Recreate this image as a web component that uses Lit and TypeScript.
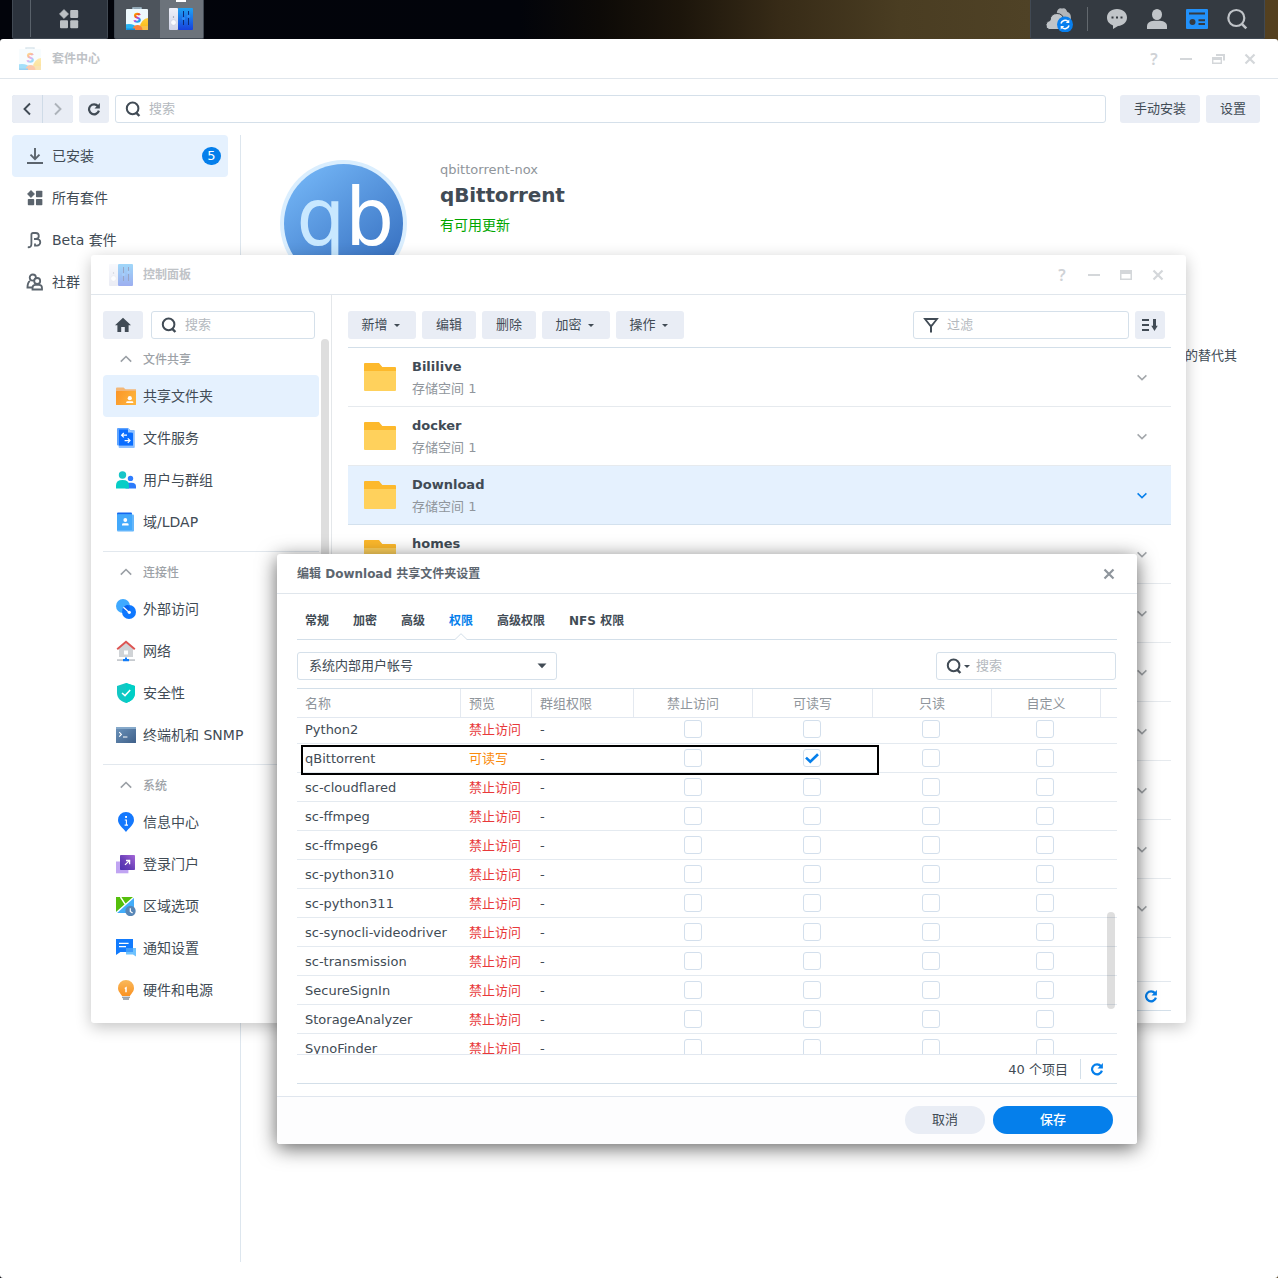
import { LitElement, html, svg, css, nothing, type TemplateResult } from "lit";
import { customElement } from "lit/decorators.js";
import { classMap } from "lit/directives/class-map.js";

const icon = (w: number, h: number, body: unknown) =>
  html`<svg class="icon" width=${w} height=${h} viewBox="0 0 ${w} ${h}" fill="none">${body}</svg>`;

const INK = "#414b55";

const searchIcon = () =>
  icon(16, 16, svg`<circle cx="7.6" cy="7.4" r="5.8" stroke=${INK} stroke-width="2"/><path d="M11.3 11.8L14.4 15" stroke=${INK} stroke-width="2.4"/>`);
const refreshIcon = (c: string) =>
  icon(14, 14, svg`<path d="M11 4.2A5 5 0 1 0 11.9 8.6" stroke=${c} stroke-width="2.2"/><path d="M12.9 1V6.4H7.5Z" fill=${c}/>`);
const caretIcon = () => icon(6, 3, svg`<path d="M0 0H6L3 3Z" fill=${INK}/>`);
const chevronDown = (c: string) => icon(12, 8, svg`<path d="M1.6 1.4L6 5.6L10.4 1.4" stroke=${c} stroke-width="1.5"/>`);
const chevronUp = () => icon(14, 8, svg`<path d="M1.8 6.6L7 1.5L12.2 6.6" stroke="#9a9fa5" stroke-width="1.6"/>`);
const gridIcon = (c: string, s: number) =>
  html`<svg class="icon" width=${s} height=${s} viewBox="0 0 20 20"><g fill=${c}>
    <path d="M5 0.4L9.6 5L5 9.6L0.4 5Z" stroke=${c} stroke-width="0.5" stroke-linejoin="round"/>
    <rect x="11.2" y="1" width="8" height="8" rx="1"/><rect x="1" y="11.2" width="8" height="8" rx="1"/>
    <rect x="11.2" y="11.2" width="8" height="8" rx="1"/></g></svg>`;

const packageIcon = () =>
  icon(24, 24, svg`
    <defs>
      <linearGradient id="pkS" x1="0" y1="0" x2="0.6" y2="1"><stop offset="0" stop-color="#ffb000"/><stop offset=".4" stop-color="#f0561e"/><stop offset=".65" stop-color="#c03be0"/><stop offset="1" stop-color="#18a8f0"/></linearGradient>
      <linearGradient id="pkY" x1="0" y1="0" x2="0" y2="1"><stop offset="0" stop-color="#ffd03c"/><stop offset="1" stop-color="#f0a800"/></linearGradient>
      <clipPath id="pkC"><rect x="1" y="2" width="22" height="21" rx="1"/></clipPath>
    </defs>
    <path d="M8 2.5V1H16V2.5" stroke="#a9c4d4" stroke-width="1.4"/>
    <g clip-path="url(#pkC)">
      <rect x="1" y="2" width="22" height="21" fill="#edf8fd"/>
      <circle cx="24" cy="20" r="9" fill="url(#pkY)"/>
      <rect x="1" y="19" width="22" height="4" fill="#f5c04a"/>
      <ellipse cx="4" cy="20" rx="7" ry="3" fill="#28b4f2"/>
      <circle cx="12.5" cy="23" r="5" fill="#f8813c"/>
      <rect x="1" y="21.5" width="9" height="2" fill="#0f8ee0"/>
    </g>
    <path d="M14.800 8.200C14.200 6.400 10 6.200 10 8.700C10 11.200 14.800 10.200 14.800 12.800C14.800 15.400 10 15.200 9.400 13.200" stroke="url(#pkS)" stroke-width="2.2"/>`);

const panelIcon = () =>
  icon(26, 24, svg`
    <defs>
      <linearGradient id="cpB" x1="0" y1="0" x2="0" y2="1"><stop offset="0" stop-color="#1fa2f2"/><stop offset="1" stop-color="#1741dc"/></linearGradient>
      <linearGradient id="cpG" x1="0" y1="0" x2="0" y2="1"><stop offset="0" stop-color="#eff1fa"/><stop offset="1" stop-color="#cfd3e6"/></linearGradient>
    </defs>
    <rect x="1" y="1" width="9" height="22" rx="1" fill="url(#cpG)"/>
    <rect x="10" y="1" width="15" height="22" rx="1" fill="url(#cpB)"/>
    <circle cx="5.5" cy="15.5" r="2.8" fill="#fafbff" stroke="#c6cada" stroke-width=".6"/><circle cx="5.5" cy="10" r=".7" fill="#8a90a4"/>
    <path d="M15.500 4V18M20.500 4V18" stroke="#0c2a78" stroke-width="1"/>
    <circle cx="15.500" cy="11.5" r="1.6" fill="#2e8cf6"/><circle cx="20.500" cy="9.3" r="1.6" fill="#2e8cf6"/>`);

const menuIcons: Record<string, () => TemplateResult> = {
  share: () => icon(20, 20, svg`<defs><linearGradient id="g1" x1="0" x2="1" y1="0" y2=".4"><stop offset="0" stop-color="#fb9526"/><stop offset="1" stop-color="#fdb23c"/></linearGradient></defs>
    <path d="M0 2.500Q0 1.500 1 1.500H7.500L9.500 3.200H20V8H0Z" fill="#f3b777"/><rect x="0" y="5" width="20" height="14" rx=".6" fill="url(#g1)"/>
    <circle cx="13.8" cy="12.2" r="2.1" fill="#fff"/><path d="M10.2 17V16.4Q10.2 15.2 11.6 15.2H16Q17.3 15.2 17.3 16.4V17Z" fill="#fff"/>`),
  files: () => icon(20, 20, svg`<rect x="2.6" y="2" width="16.2" height="18" rx="1" fill="#8fc0ff"/><path d="M1 1Q1 0 2 0H12L17 4.6V17.6H2Q1 17.6 1 16.8Z" fill="#5da3ff"/><path d="M3 1.6H12.4L17 5.4V17.6H3Z" fill="#0a6dff"/><path d="M12 .2L17 4.6H12Z" fill="#9cc9ff"/>
    <path d="M5.6 7.2H11M7.8 5L5.6 7.2L7.8 9.4M14 12.6H8.6M11.8 10.4L14 12.6L11.8 14.8" stroke="#fff" stroke-width="1.2"/>`),
  users: () => icon(20, 20, svg`<circle cx="6.5" cy="5" r="3.7" fill="#17c5c8"/><circle cx="14.5" cy="8.4" r="2.7" fill="#2f7dff"/><path d="M9.5 12.7H15.5Q20 12.7 20 16.4V18.6H9.5Z" fill="#2d7bfb"/><path d="M0 18.6V15.4Q0 10 6.5 10Q13 10 13 15.4V18.6Z" fill="#06cdc6"/>`),
  ldap: () => icon(20, 20, svg`<rect x="1" y=".6" width="15" height="17" rx="1" fill="#1368f0"/><rect x="1" y="2.4" width="17" height="17.2" rx="1" fill="#64b6fb"/><rect x="1" y="2.4" width="15" height="15.6" fill="#43a9fb"/>
    <circle cx="9.3" cy="8" r="1.9" fill="#fff"/><path d="M6 13.4V12.6Q6 11.2 7.4 11.2H11.2Q12.6 11.2 12.6 12.6V13.4Z" fill="#fff"/>`),
  external: () => icon(20, 20, svg`<circle cx="7" cy="7" r="7" fill="#3fa9ff"/><circle cx="13" cy="13" r="7" fill="#0f78ff"/><path d="M6.4 10.6Q7.6 6.9 11.6 6.1Q13.6 8 13.9 9.4L13 13Z" fill="#0a62ee"/><path d="M7.4 8.2L13 13.2" stroke="#fff" stroke-width="1.3"/><circle cx="13.3" cy="13.3" r="1.6" fill="#fff"/>`),
  network: () => icon(20, 22, svg`<path d="M3 8.5L10 2.5L17 8.5V17H3Z" fill="#d0d3d6"/><path d="M1.2 9.2L10 1.8L18.8 9.2" stroke="#dc5452" stroke-width="2"/><rect x="8" y="10.5" width="4" height="4" fill="#fff"/><rect x="1" y="19.2" width="18" height="1.8" fill="#c6cacf"/><path d="M9 17.4H11V19H13V21.2H7V19H9Z" fill="#127cf8"/>`),
  shield: () => icon(20, 20, svg`<path d="M10 0L19 3V10C19 15.2 15 18.5 10 20C5 18.5 1 15.2 1 10V3Z" fill="#12c7c4"/><path d="M10 0L19 3V10C19 15.2 15 18.5 10 20Z" fill="#00cfc6"/><path d="M6 10L9 12.6L14.2 7" stroke="#fff" stroke-width="1.5"/>`),
  terminal: () => icon(20, 20, svg`<defs><linearGradient id="g2" x1="0" x2="1" y1="0" y2="1"><stop offset="0" stop-color="#6c93bb"/><stop offset="1" stop-color="#3f6089"/></linearGradient></defs><rect x="0" y="2" width="20" height="16" rx=".6" fill="url(#g2)"/><rect x="0" y="2" width="20" height="2" fill="#86a9ca"/><path d="M3.2 7.2L5.4 9.4L3.2 11.6M7 12H11.4" stroke="#fff" stroke-width="1.1"/>`),
  info: () => icon(20, 20, svg`<path d="M10 0A8 8 0 0 1 18 8C18 12.5 13 16 10 20C7 16 2 12.5 2 8A8 8 0 0 1 10 0Z" fill="#1478fd"/><rect x="9.1" y="4" width="1.9" height="1.9" fill="#fff"/><path d="M8.800 8H10.400V13M8.600 13.100H12" stroke="#fff" stroke-width="1.1"/>`),
  portal: () => icon(20, 20, svg`<defs><linearGradient id="g3" x1="1" x2="0" y1="0" y2="1"><stop offset="0" stop-color="#a566d8"/><stop offset=".55" stop-color="#6a40b8"/><stop offset="1" stop-color="#4d2fb0"/></linearGradient></defs><rect x="0" y="7.500" width="12.400" height="11.800" fill="#c0a4f2"/><rect x="4" y="1" width="15" height="15" rx=".8" fill="url(#g3)"/><path d="M9 10.900L13.400 6.600M10 6.500H13.600V10.200" stroke="#fff" stroke-width="1.3"/>`),
  region: () => icon(20, 20, svg`<path d="M0 1H18V17H0Z" fill="#43adfa"/><path d="M0 1H18L0 16Z" fill="#55bf0c"/><path d="M18 1L0 17M4.500 1L9.400 8.600" stroke="#fff" stroke-width="1.4"/><circle cx="14.5" cy="15" r="5.200" fill="#5786b7"/><path d="M14.300 12.200V15.400L16.600 17" stroke="#fff" stroke-width="1.2"/>`),
  notify: () => icon(20, 20, svg`<path d="M0 1H17V14H4.4L0 17Z" fill="#127bfd"/><path d="M3 5.4H12.6M3 8.6H10" stroke="#fff" stroke-width="1.1"/><path d="M10 10H20V18.6L17 16.6H10Z" fill="#6ec2fe"/><rect x="10" y="10" width="7" height="4" fill="#3f9cfb"/>`),
  power: () => icon(20, 20, svg`<defs><linearGradient id="g4" x1="0" x2="0" y1="0" y2="1"><stop offset="0" stop-color="#f9b95c"/><stop offset="1" stop-color="#fa9222"/></linearGradient></defs><path d="M10 0A8 8 0 0 1 18 8C18 11.6 15.4 13.4 14 16H6C4.600 13.400 2 11.600 2 8A8 8 0 0 1 10 0Z" fill="url(#g4)"/><path d="M8.8 8.600L10 7.900V12.200" stroke="#fff" stroke-width="1.500"/><rect x="6" y="16.600" width="8" height="1.500" fill="#9ba4ad"/><rect x="7" y="18.100" width="6" height="1.800" fill="#9ba4ad"/>`),
};

const sections = [
  { title: "文件共享", items: [["share", "共享文件夹"], ["files", "文件服务"], ["users", "用户与群组"], ["ldap", "域/LDAP"]] },
  { title: "连接性", items: [["external", "外部访问"], ["network", "网络"], ["shield", "安全性"], ["terminal", "终端机和 SNMP"]] },
  { title: "系统", items: [["info", "信息中心"], ["portal", "登录门户"], ["region", "区域选项"], ["notify", "通知设置"], ["power", "硬件和电源"]] },
];

const folders = ["Bililive", "docker", "Download", "homes", "", "", "", "", "", ""];

const users = ["Python2", "qBittorrent", "sc-cloudflared", "sc-ffmpeg", "sc-ffmpeg6", "sc-python310", "sc-python311",
  "sc-synocli-videodriver", "sc-transmission", "SecureSignIn", "StorageAnalyzer", "SynoFinder"];

@customElement("app-root")
export class AppRoot extends LitElement {
  static styles = css`
    :host { display: block; color: #414b55; font: 13px/20px "DejaVu Sans", "Noto Sans CJK SC", sans-serif; }
    * { box-sizing: border-box; }
    .icon { display: block; flex: none; }
    .desktop { position: relative; width: 1278px; height: 1278px; overflow: hidden;
      background: linear-gradient(90deg, #02040b 0, #02040a 520px, #0d0a07 600px, #1c150b 680px, #372b17 780px, #4a3d22 900px, #4f4226 1031px, #54401f 1278px); }

    .taskbar { display: flex; height: 39px; padding: 0 12px; gap: 6px; }
    .tb { display: flex; height: 39px; background: #2c333d; border: 1px solid #414953; border-top: 0; border-radius: 0 0 2px 2px; }
    .tb-main { width: 96px; }
    .tb-edge { width: 18px; border-right: 1px solid #59616a; height: 37px; }
    .tb-grid { flex: 1; display: flex; align-items: center; justify-content: center; }
    .tb-apps { width: 90px; background: #4d545c; }
    .tb-app { width: 45px; height: 38px; display: flex; align-items: center; justify-content: center; }
    .tb-app.on { background: #6c737b; width: 44px; flex-direction: column; justify-content: flex-start; }
    .tb-mark { width: 10px; height: 2px; background: #fff; margin-bottom: 5px; }
    .tray { margin-left: auto; width: 235px; margin-right: 1px; align-items: center; background: #343a41; padding-left: 14px; }
    .tray-sep { width: 1px; height: 24px; background: #62686e; margin: 0 18px 0 14px; }
    .tray-items { display: flex; gap: 18px; align-items: center; }

    .window { position: absolute; background: #fff; display: flex; flex-direction: column; border-radius: 3px; }
    .pkg { left: 0; top: 39px; width: 1278px; height: 1239px; }
    .cp { left: 91px; top: 255px; width: 1095px; height: 768px; box-shadow: 0 4px 16px rgba(0,0,0,.24); }
    .dlg { left: 277px; top: 554px; width: 860px; height: 590px; box-shadow: 0 4px 20px rgba(0,0,0,.62); }
    .titlebar { flex: none; height: 40px; display: flex; align-items: center; padding: 0 20px 0 18px; border-bottom: 1px solid #e0e6ec; font-size: 12px; font-weight: bold; }
    .titlebar .name { color: #bfc3c7; margin-left: 10px; padding-top: 1px; }
    .faded { opacity: .42; display: flex; }
    .controls { margin-left: auto; display: flex; gap: 16px; }
    .ctl { width: 16px; height: 16px; display: flex; align-items: center; justify-content: center; color: #cfd2d6; font: 600 16px/16px "Noto Sans", sans-serif; }
    .cp .titlebar { padding-left: 17px; }
    .cp .titlebar .name { margin-left: 9px; }

    .btn { height: 28px; border-radius: 3px; background: #e9edf5; display: flex; align-items: center; justify-content: center; gap: 6px; flex: none; }
    .field { height: 28px; border: 1px solid #d5e0ea; border-radius: 3px; display: flex; align-items: center; padding-left: 9px; gap: 8px; color: #b4b9be; background: #fff; }
    .w30 { width: 30px; } .w40 { width: 40px; } .w54 { width: 54px; } .w68 { width: 68px; padding-right: 3px; } .w80 { width: 80px; }

    .pkg-tools { display: flex; padding: 16px 18px 12px 12px; gap: 6px; }
    .pair { display: flex; gap: 1px; background: #cfdbe7; border-radius: 3px; overflow: hidden; width: 61px; }
    .pair .btn { border-radius: 0; }
    .pkg-search { flex: 1; margin-right: 8px; }
    .pkg-body { display: flex; flex: 1; padding: 0 0 16px 12px; }
    .pkg-nav { width: 229px; padding-right: 12px; border-right: 1px solid #dde6ee; font-size: 14px; }
    .nav-item { height: 42px; display: flex; align-items: center; border-radius: 4px; padding: 0 7px 0 13px; gap: 7px; font-size: 14px; }
    .nav-item.on { background: #e5f1fe; }
    .nav-ico { width: 20px; display: flex; justify-content: center; }
    .badge { margin-left: auto; width: 19px; height: 18px; border-radius: 9px; background: #057feb; color: #fff; font-size: 13px; line-height: 18px; text-align: center; }
    .pkg-detail { flex: 1; padding: 25px 41px 0 39px; }
    .pkg-head { display: flex; gap: 32px; height: 186px; }
    .pkg-info { color: #8f959b; }
    .pkg-info div { height: 19px; line-height: 19px; }
    .pkg-info .pkg-title { color: #414b55; font-size: 20px; font-weight: bold; line-height: 32px; height: 32px; letter-spacing: -.15px; }
    .pkg-info .pkg-update { color: #00a600; font-size: 14px; line-height: 28px; height: 28px; }
    .pkg-desc { text-align: right; line-height: 20px; }

    .cp-body { display: flex; flex: 1; min-height: 0; }
    .cp-nav { width: 241px; border-right: 1px solid #e4e7ea; padding: 16px 12px 0 12px; position: relative; }
    .cp-find { display: flex; gap: 8px; margin-bottom: 4px; }
    .cp-find .field { width: 164px; }
    .sec { height: 32px; display: flex; align-items: center; padding-left: 16px; gap: 10px; color: #9da2a7; font-size: 12px; font-weight: 500; }
    .sec span { padding-top: 2px; }
    .divider { height: 1px; background: #e2e8ee; margin: 8px 0 4px; }
    .nav-scroll { position: absolute; left: 230px; top: 44px; width: 8px; height: 500px; border-radius: 4px; background: #dedede; }
    .cp-main { flex: 1; padding: 16px 15px 12px 16px; display: flex; flex-direction: column; }
    .cp-tools { display: flex; gap: 6px; padding: 0 6px 8px 0; border-bottom: 1px solid #d3dfe9; }
    .cp-tools .field { width: 216px; margin-left: auto; }
    .folder { height: 59px; display: flex; align-items: center; border-bottom: 1px solid #e6eaee; padding: 0 23px 0 16px; }
    .folder.on { background: #e5f1fe; border-bottom-color: #d3e1ee; }
    .folder > .folder-text + .icon { margin-top: 2px; }
    .folder-text { margin-left: 16px; flex: 1; padding-top: 2px; }
    .folder-name { font-weight: bold; line-height: 22px; height: 22px; }
    .folder-sub { color: #90969c; line-height: 22px; }
    .cp-foot { margin-top: auto; height: 30px; border-top: 1px solid #e2e8ee; border-bottom: 1px solid #d3dfe9; display: flex; align-items: center; justify-content: flex-end; padding-right: 13px; }

    .dlg .titlebar { padding-left: 20px; color: #5d666f; }
    .dlg-body { padding: 0 20px; flex: 1; }
    .tabs { display: flex; gap: 24px; height: 46px; padding: 14px 8px 0; border-bottom: 1px solid #d3dfe9; font-size: 12px; font-weight: bold; line-height: 26px; }
    .tab { position: relative; }
    .tab.on { color: #057feb; }
    .tab .notch { position: absolute; left: 6px; top: 25px; }
    .dlg-tools { display: flex; justify-content: space-between; padding: 12px 1px 8px 0; }
    .select { width: 260px; padding: 0 9px 0 11px; justify-content: space-between; color: #414b55; }
    .dlg-tools .search { width: 180px; gap: 0; }
    .search .drop { margin-left: 2px; }
    .search .hint { margin-left: 6px; }
    .row { display: grid; grid-template-columns: 164px 71px 102px 119px 120px 119px 109px 16px; }
    .thead { height: 30px; border-top: 1px solid #d3dfe9; border-bottom: 1px solid #e2e8f0; color: #8f959b; }
    .thead .cell { border-right: 1px solid #e4e9f0; padding-top: 2px; }
    .thead .cell:last-child { border-right: 0; }
    .cell { padding-left: 8px; display: flex; align-items: center; }
    .cell.mid { padding-left: 0; justify-content: center; }
    .tview { height: 337px; overflow: hidden; border-bottom: 1px solid #e2e8f0; position: relative; }
    .trows { margin-top: -3px; }
    .trow { height: 29px; border-bottom: 1px solid #e4eaf0; }
    .trow .cell { padding-top: 2px; }
    .trow .mid { padding: 0 1px 0 0; }
    .trow .mid + .mid { padding-right: 2px; }
    .trow .mid + .mid + .mid { padding-right: 3px; }
    .deny { color: #e8383a; }
    .allow { color: #fa8a0c; }
    .box { width: 18px; height: 18px; border: 1px solid #d3dfec; border-radius: 3px; background: #fff; display: flex; align-items: center; justify-content: center; }
    .thumb { position: absolute; left: 810px; top: 194px; width: 8px; height: 97px; border-radius: 4px; background: rgba(0,0,0,.13); }
    .count { height: 29px; border-bottom: 1px solid #d3dfe9; display: flex; align-items: center; justify-content: flex-end; padding-right: 13px; }
    .count-num { padding-top: 2px; }
    .count-sep { width: 1px; height: 20px; background: #d3dfe9; margin: 0 9px 0 12px; }
    .actions { height: 48px; border-top: 1px solid #e0e6ee; display: flex; align-items: center; justify-content: flex-end; gap: 8px; padding: 0 24px 1px 0; background: #fdfdfe; border-radius: 0 0 3px 3px; }
    .actions .btn { border-radius: 14px; }
    .actions .save { width: 120px; background: #057feb; color: #fff; font-weight: 500; }
    .marker { position: absolute; left: 24px; top: 191px; width: 578px; height: 30px; border: 2px solid #000; }
    .logo-text { font: 80px "DejaVu Sans", sans-serif; }
  `;

  private controls(kind: "restore" | "max") {
    const c = "#d4d7da";
    return html`<div class="controls">
      <div class="ctl">?</div>
      <div class="ctl">${icon(12, 2, svg`<rect width="12" height="2" fill=${c}/>`)}</div>
      <div class="ctl">${kind === "max"
        ? icon(12, 10, svg`<path d="M0 0H12V10H0ZM1.500 4V8.600H10.500V4Z" fill-rule="evenodd" fill=${c}/>`)
        : icon(13, 10, svg`<path d="M4 0H13V6.500H11V2H4Z" fill=${c}/><path d="M0 3H10V10H0ZM1.400 6V8.600H8.600V6Z" fill-rule="evenodd" fill=${c}/>`)}</div>
      <div class="ctl">${icon(12, 12, svg`<path d="M1.500 1.500L10.500 10.500M10.500 1.500L1.500 10.500" stroke=${c} stroke-width="2.200"/>`)}</div>
    </div>`;
  }

  private taskbar() {
    const g = "#c0c4c8";
    return html`<div class="taskbar">
      <div class="tb tb-main"><div class="tb-edge"></div><div class="tb-grid">${gridIcon("#bcc0c4", 20)}</div></div>
      <div class="tb tb-apps"><div class="tb-app">${packageIcon()}</div><div class="tb-app on"><div class="tb-mark"></div>${panelIcon()}</div></div>
      <div class="tb tray">
        ${icon(28, 26, svg`<path d="M12 12A6 6 0 0 1 22.500 6Q26 7 26 12V18H12Z" fill="#a9adb1"/><path d="M12 6Q13 1.500 17 2.500Q21 1 22 6Q26 8 25 14L20 15L15 8Z" fill="#b2b6ba"/><path d="M4 23.500Q0.500 22.500 1 18.500Q1.500 15 5 14.500Q5.500 7.500 12 7.500Q18 7.500 19 14V23.500Z" fill=${g} stroke="#343a41" stroke-width="1"/><circle cx="20" cy="18.500" r="8" fill="#087fee"/><path d="M16 17.500A4.200 4.200 0 0 1 23 15.500M24 19.500A4.200 4.200 0 0 1 17 21.500" stroke="#fff" stroke-width="1.500"/><path d="M24.300 13.500V17H20.800ZM15.700 23.500V20H19.200Z" fill="#fff"/>`)}
        <div class="tray-sep"></div>
        <div class="tray-items">
          ${icon(22, 22, svg`<path d="M11 1C17 1 21 4.800 21 9.500C21 14 17.500 17.500 12 18L7 21V17.400C3.500 16 1 13.500 1 9.500C1 4.800 5 1 11 1Z" fill=${g}/><path d="M5.500 8.500H7.500V10.500H5.500ZM10 8.500H12V10.500H10ZM14.500 8.500H16.500V10.500H14.500Z" fill="#343a41"/>`)}
          ${icon(22, 22, svg`<ellipse cx="11" cy="6.500" rx="5" ry="5.500" fill=${g}/><path d="M1 21V18Q1 13.500 8 12.800H14Q21 13.500 21 18V21Z" fill=${g}/>`)}
          ${icon(22, 22, svg`<rect y="1" width="22" height="20" rx="1" fill="#2291fa"/><path d="M3 5.500H19M12.500 12.300H19M12.500 16H19" stroke="#343a41" stroke-width="2"/><circle cx="6.500" cy="14" r="3" fill="#343a41"/>`)}
          ${icon(22, 22, svg`<circle cx="10.300" cy="10" r="8" stroke=${g} stroke-width="2.200"/><path d="M15.800 15.800L20.300 20.300" stroke=${g} stroke-width="2.600"/>`)}
        </div>
      </div>
    </div>`;
  }

  private packageCenter() {
    const n = "#5b646d";
    const items: [TemplateResult, string][] = [
      [icon(16, 16, svg`<path d="M8 0V11M3.500 6.600L8 11.100L12.500 6.600" stroke=${n} stroke-width="1.900"/><path d="M0 15H16" stroke=${n} stroke-width="2"/>`), "已安装"],
      [gridIcon(n, 16), "所有套件"],
      [icon(16, 18, svg`<path d="M.8 16.200Q4.400 16.600 4.400 13V3.400Q4.400 2 6 2H8.800A3 3 0 0 1 8.800 8H7M8.800 8H10A3.300 3.300 0 0 1 10 14.600H8V12.600" stroke=${n} stroke-width="1.800"/>`), "Beta 套件"],
      [icon(18, 18, svg`<circle cx="6.800" cy="4.600" r="3.100" stroke=${n} stroke-width="1.800"/><path d="M4 8Q1.500 9.500 1.500 14.500H6" stroke=${n} stroke-width="1.900"/><circle cx="11.200" cy="8" r="3" fill="#fff" stroke=${n} stroke-width="1.800"/><path d="M6.500 16.500V15Q6.500 11.800 9.500 11.800H13Q16 11.800 16 15V16.500Z" fill="#fff" stroke=${n} stroke-width="1.800"/>`), "社群"],
    ];
    return html`<section class="window pkg">
      <header class="titlebar"><span class="faded">${packageIcon()}</span><span class="name">套件中心</span>${this.controls("restore")}</header>
      <div class="pkg-tools">
        <div class="pair">
          <div class="btn w30">${icon(8, 14, svg`<path d="M7 1.500L1.500 7L7 12.500" stroke=${INK} stroke-width="1.900"/>`)}</div>
          <div class="btn w30">${icon(8, 14, svg`<path d="M1 1.500L6.500 7L1 12.500" stroke="#adb3ba" stroke-width="1.900"/>`)}</div>
        </div>
        <div class="btn w30">${refreshIcon(INK)}</div>
        <div class="field pkg-search">${searchIcon()}<span>搜索</span></div>
        <div class="btn w80">手动安装</div>
        <div class="btn w54">设置</div>
      </div>
      <div class="pkg-body">
        <nav class="pkg-nav">
          ${items.map(([i, t], k) => html`<div class=${classMap({ "nav-item": true, on: k === 0 })}>
            <span class="nav-ico">${i}</span><span>${t}</span>${k === 0 ? html`<span class="badge">5</span>` : nothing}</div>`)}
        </nav>
        <div class="pkg-detail">
          <div class="pkg-head">
            ${icon(128, 128, svg`<defs><linearGradient id="qb" x1=".15" y1=".05" x2=".85" y2=".95"><stop offset="0" stop-color="#72b4f5"/><stop offset="1" stop-color="#356ebf"/></linearGradient></defs>
              <circle cx="63.500" cy="63.500" r="63.500" fill="#daeefe"/><circle cx="63.500" cy="63.500" r="59.500" fill="url(#qb)"/>
              <text class="logo-text" transform="translate(16.500 85) scale(.96 1)" fill="#fff"><tspan fill="#c8e8ff">q</tspan><tspan>b</tspan></text>`)}
            <div class="pkg-info"><div>qbittorrent-nox</div><div class="pkg-title">qBittorrent</div><div class="pkg-update">有可用更新</div></div>
          </div>
          <div class="pkg-desc">的替代其</div>
        </div>
      </div>
    </section>`;
  }

  private controlPanel() {
    return html`<section class="window cp">
      <header class="titlebar"><span class="faded">${panelIcon()}</span><span class="name">控制面板</span>${this.controls("max")}</header>
      <div class="cp-body">
        <nav class="cp-nav">
          <div class="cp-find">
            <div class="btn w40">${icon(16, 16, svg`<path d="M8 .8L16 8.300H13.600V15H9.800V10H6.200V15H2.400V8.300H0Z" fill=${INK}/>`)}</div>
            <div class="field">${searchIcon()}<span>搜索</span></div>
          </div>
          ${sections.map((s, si) => html`
            ${si ? html`<div class="divider"></div>` : nothing}
            <div class="sec">${chevronUp()}<span>${s.title}</span></div>
            ${s.items.map(([k, t]) => html`<div class=${classMap({ "nav-item": true, on: k === "share" })}><span class="nav-ico">${menuIcons[k]()}</span><span>${t}</span></div>`)}`)}
          <div class="nav-scroll"></div>
        </nav>
        <div class="cp-main">
          <div class="cp-tools">
            <div class="btn w68">新增 ${caretIcon()}</div><div class="btn w54">编辑</div><div class="btn w54">删除</div>
            <div class="btn w68">加密 ${caretIcon()}</div><div class="btn w68">操作 ${caretIcon()}</div>
            <div class="field">${icon(16, 16, svg`<path d="M2 2H14L8.800 8.500H7.200Z" stroke=${INK} stroke-width="1.800"/><path d="M8 8V15.500" stroke=${INK} stroke-width="2"/>`)}<span>过滤</span></div>
            <div class="btn w30">${icon(16, 14, svg`<path d="M0 2H7M0 7H7M0 12H7" stroke=${INK} stroke-width="2"/><path d="M12.500 1V9" stroke=${INK} stroke-width="3"/><path d="M9.300 7.800H15.700L12.500 13Z" fill=${INK}/>`)}</div>
          </div>
          ${folders.map((f) => html`<div class=${classMap({ folder: true, on: f === "Download" })}>
            ${f ? icon(32, 28, svg`<path d="M0 1Q0 0 1 0H15L18.300 4H31Q32 4 32 5V12H0Z" fill="#fdb92c"/><path d="M0 8H32V27Q32 28 31 28H1Q0 28 0 27Z" fill="#ffd15c"/>`) : nothing}
            <div class="folder-text">${f ? html`<div class="folder-name">${f}</div><div class="folder-sub">${f === "homes" ? nothing : "存储空间 1"}&nbsp;</div>` : nothing}</div>
            ${chevronDown(f === "Download" ? "#057feb" : "#a3a7ab")}
          </div>`)}
          <div class="cp-foot">${refreshIcon("#057feb")}</div>
        </div>
      </div>
    </section>`;
  }

  private dialog() {
    const tabs = ["常规", "加密", "高级", "权限", "高级权限", "NFS 权限"];
    return html`<section class="window dlg">
      <header class="titlebar"><span>编辑 Download 共享文件夹设置</span>
        <div class="controls"><div class="ctl">${icon(12, 12, svg`<path d="M1.500 1.500L10.500 10.500M10.500 1.500L1.500 10.500" stroke="#8e959c" stroke-width="2.200"/>`)}</div></div></header>
      <div class="dlg-body">
        <div class="tabs">${tabs.map((t) => html`<div class=${classMap({ tab: true, on: t === "权限" })}>${t}${t === "权限"
          ? html`<span class="notch">${icon(12, 7, svg`<path d="M0 6.500L6 .7L12 6.500V7H0Z" fill="#fff"/><path d="M0 6.500L6 .7L12 6.500" stroke="#d3dfe9"/>`)}</span>` : nothing}</div>`)}</div>
        <div class="dlg-tools">
          <div class="field select"><span>系统内部用户帐号</span>${icon(10, 6, svg`<path d="M.5 .5H9.500L5 5.300Z" fill=${INK}/>`)}</div>
          <div class="field search">${searchIcon()}<span class="drop">${caretIcon()}</span><span class="hint">搜索</span></div>
        </div>
        <div class="row thead">
          <div class="cell">名称</div><div class="cell">预览</div><div class="cell">群组权限</div>
          ${["禁止访问", "可读写", "只读", "自定义", ""].map((t) => html`<div class="cell mid">${t}</div>`)}
        </div>
        <div class="tview">
          <div class="trows">${users.map((u) => {
            const rw = u === "qBittorrent";
            return html`<div class="row trow">
              <div class="cell">${u}</div>
              <div class=${classMap({ cell: true, deny: !rw, allow: rw })}>${rw ? "可读写" : "禁止访问"}</div>
              <div class="cell">-</div>
              ${[0, 1, 2, 3].map((i) => html`<div class="cell mid"><span class="box">${rw && i === 1
                ? icon(14, 11, svg`<path d="M1 4.600L5.300 8.800L13 1.300" stroke="#057feb" stroke-width="2.600"/>`) : nothing}</span></div>`)}
            </div>`;
          })}</div>
          <div class="thumb"></div>
        </div>
        <div class="count"><span class="count-num">40 个项目</span><span class="count-sep"></span>${refreshIcon("#057feb")}</div>
      </div>
      <footer class="actions"><div class="btn w80">取消</div><div class="btn save">保存</div></footer>
      <div class="marker"></div>
    </section>`;
  }

  render() {
    return html`<div class="desktop">${this.taskbar()}${this.packageCenter()}${this.controlPanel()}${this.dialog()}</div>`;
  }
}
